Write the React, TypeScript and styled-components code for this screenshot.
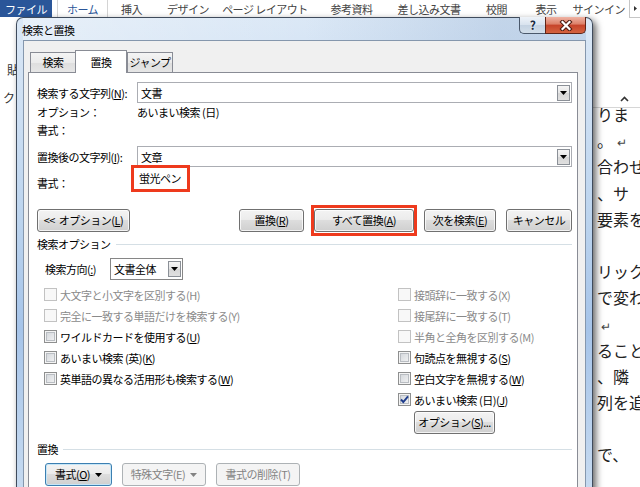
import * as React from "react";
import styled, { createGlobalStyle, css } from "styled-components";

const GlobalStyle = createGlobalStyle`
  * { box-sizing: border-box; }
  html, body {
    margin: 0;
    padding: 0;
    background: #ffffff;
    overflow: hidden;
  }
  body {
    font-family: "Noto Sans CJK JP", "Noto Sans", "Liberation Sans", sans-serif;
    font-size: 11px;
    letter-spacing: -0.5px;
    color: #000;
  }
`;

const Screen = styled.div`
  width: 640px;
  height: 487px;
  overflow: hidden;
  display: flex;
  flex-direction: column;
  background: #fff;
`;

/* ---------- Word ribbon behind the dialog ---------- */

const RibbonTabs = styled.div`
  height: 17px;
  flex-shrink: 0;
  display: flex;
  line-height: 15px;
  color: #444;
`;

const FileTab = styled.div`
  width: 52px;
  margin-right: 5px;
  padding-top: 2px;
  background: #2a5699;
  color: #fff;
  text-align: center;
`;

const RibbonTab = styled.div<{ $w: number; $active?: boolean; $right?: boolean }>`
  width: ${p => p.$w}px;
  flex-shrink: 0;
  padding-top: 2px;
  text-align: ${p => (p.$right ? "right" : "center")};
  padding-right: ${p => (p.$right ? 4 : 0)}px;
  white-space: nowrap;
  ${p =>
    p.$active &&
    css`
      background: #fff;
      color: #2a5699;
      border-left: 1px solid #d4d4d4;
      border-right: 1px solid #d4d4d4;
    `}
`;

const MoreBox = styled.div`
  width: 11px;
  height: 18px;
  border-left: 1px solid #c6c6c6;
  border-bottom: 1px solid #c6c6c6;
  display: flex;
  align-items: center;
  justify-content: center;
`;

const Main = styled.div`
  flex: 1;
  min-height: 0;
  display: flex;
  align-items: flex-start;
`;

const LeftStrip = styled.div`
  width: 16px;
  flex-shrink: 0;
  overflow: hidden;
  padding-top: 45px;
  font-size: 12px;
  line-height: 16px;
  color: #333;
  white-space: nowrap;
`;

const StripText = styled.div<{ $x: number; $gap?: number }>`
  padding-left: ${p => p.$x}px;
  margin-top: ${p => p.$gap ?? 0}px;
`;

const RightStrip = styled.div`
  flex: 1;
  min-width: 0;
  overflow: hidden;
  display: flex;
  flex-direction: column;
`;

const RibbonRest = styled.div`
  height: 91px;
  border-bottom: 1px solid #d6d6d6;
  display: flex;
  align-items: flex-end;
  justify-content: flex-end;
  padding: 0 11px 5px 0;
`;

const DocText = styled.div`
  margin-top: -7px;
  padding-left: 4px;
  font-size: 16px;
  letter-spacing: 0;
  line-height: 26.2px;
  color: #222;
  white-space: pre;
`;

const DocLine = styled.div`
  height: 26.2px;
`;

const Ret = styled.span`
  font-size: 12px;
  color: #444;
  margin-left: 4px;
`;

/* ---------- Dialog window ---------- */

const Dialog = styled.div`
  position: relative;
  z-index: 2;
  width: 577px;
  flex-shrink: 0;
  display: flex;
  flex-direction: column;
  border: 1px solid #3f4b5c;
  border-bottom: none;
  border-radius: 7px 7px 0 0;
  padding: 0 6px;
  background: linear-gradient(
    180deg,
    #dbe8f6 0px,
    #cfe0f3 80px,
    #bcd4ee 200px,
    #a6c4e9 310px,
    #c6daf0 470px
  );
  box-shadow: 3px 3px 7px rgba(0, 0, 0, 0.6);
`;

const TitleBar = styled.div`
  height: 22px;
  display: flex;
  justify-content: space-between;
  align-items: flex-start;
  background: linear-gradient(90deg, rgba(255, 255, 255, 0.35), rgba(255, 255, 255, 0) 50%, rgba(110, 145, 190, 0.22) 85%);
`;

const TitleText = styled.div`
  padding-top: 4px;
  margin-left: -1px;
  line-height: 16px;
`;

const CaptionButtons = styled.div`
  display: flex;
  margin-top: -1px;
`;

const HelpButton = styled.div`
  width: 26px;
  height: 17px;
  border: 1px solid #4b596c;
  border-top: none;
  border-right: none;
  border-radius: 0 0 0 5px;
  background: linear-gradient(#eef3f9, #d8e2ee 50%, #c4d2e2 51%, #d2deea);
  display: flex;
  align-items: center;
  justify-content: center;
  font-size: 12px;
  font-weight: bold;
  color: #1b2a40;
  line-height: 1;
  text-shadow: 0 0 2px #fff;
`;

const CloseButton = styled.div`
  width: 41px;
  height: 17px;
  border: 1px solid #5e2418;
  border-top: none;
  border-radius: 0 0 5px 0;
  background: linear-gradient(#efb3a4, #dc7f67 45%, #c6432a 50%, #d4633f 100%);
  display: flex;
  align-items: center;
  justify-content: center;
`;

const Body = styled.div`
  background: #f0f0f0;
  border: 1px solid #8597ad;
  border-bottom: none;
  padding: 9px 7px 0 4px;
`;

const TabRow = styled.div`
  height: 23px;
  display: flex;
  align-items: flex-end;
  padding-left: 2px;
  margin-bottom: -1px;
`;

const Tab = styled.div<{ $active?: boolean }>`
  width: 46px;
  height: 20px;
  margin-bottom: 1px;
  border: 1px solid #898c95;
  border-bottom: none;
  background: linear-gradient(#f4f4f4, #ebebeb 50%, #dedede 51%, #e6e6e6);
  text-align: center;
  line-height: 19px;
  ${p =>
    p.$active &&
    css`
      position: relative;
      z-index: 1;
      width: 52px;
      height: 23px;
      margin: 0 0 0 -1px;
      background: #fff;
      line-height: 22px;
    `}
`;

const Panel = styled.div`
  background: #fff;
  border: 1px solid #898c95;
  padding: 9px 5px 30px 8px;
`;

const FieldRow = styled.div<{ $gap?: number }>`
  display: flex;
  align-items: center;
  margin-top: ${p => p.$gap ?? 0}px;
`;

const FieldLabel = styled.div<{ $drop?: number }>`
  width: 100px;
  flex-shrink: 0;
  line-height: 18px;
  white-space: nowrap;
  padding-top: ${p => p.$drop ?? 0}px;
`;

const InfoRow = styled.div`
  display: flex;
  line-height: 18px;
`;

const Combo = styled.div`
  flex: 1;
  height: 21px;
  display: flex;
  align-items: center;
  padding: 0 1px 0 3px;
  border: 1px solid #abadb3;
  background: #fff;
`;

const DropButton = styled.div`
  margin-left: auto;
  width: 13px;
  height: 16px;
  flex-shrink: 0;
  border: 1px solid #8b9097;
  background: linear-gradient(#f5f5f5, #e6e6e6 50%, #d6d6d6 51%, #e0e0e0);
  display: flex;
  align-items: center;
  justify-content: center;
`;

const RedFrame = styled.div`
  border: 3px solid #ee3a1d;
`;

const MarkedValue = styled(RedFrame)`
  margin: -2px 0 0 -6px;
  padding: 1px 6px 1px 5px;
  line-height: 19px;
`;

const MarkedButton = styled(RedFrame)`
  margin: 0 -3px;
  padding: 1px 0;
`;

const ButtonRow = styled.div`
  display: flex;
  align-items: center;
  gap: 10px;
  height: 32px;
  margin-top: 12px;
`;

const Spacer = styled.div`
  flex: 1;
`;

const Button = styled.div<{ $w: number; $disabled?: boolean; $default?: boolean }>`
  width: ${p => p.$w}px;
  height: 23px;
  flex-shrink: 0;
  display: flex;
  align-items: center;
  justify-content: center;
  gap: 5px;
  border: 1px solid #707070;
  border-radius: 3px;
  background: linear-gradient(#f3f3f3 0%, #ececec 45%, #dddddd 50%, #cfcfcf 100%);
  box-shadow: inset 0 0 0 1px rgba(255, 255, 255, 0.75);
  line-height: 1;
  white-space: nowrap;
  ${p =>
    p.$default &&
    css`
      border-color: #3c7fb1;
      box-shadow: inset 0 0 0 1px #c6e6f7;
    `}
  ${p =>
    p.$disabled &&
    css`
      border-color: #adb2b5;
      background: #f4f4f4;
      box-shadow: none;
      color: #838383;
    `}
`;

const U = styled.span`
  text-decoration: underline;
  text-underline-offset: 1px;
`;

const GroupHeader = styled.div<{ $gap: number }>`
  display: flex;
  align-items: center;
  line-height: 16px;
  margin-top: ${p => p.$gap}px;
  &::after {
    content: "";
    flex: 1;
    height: 1px;
    margin-left: 5px;
    background: #d5dfe5;
  }
`;

const DirectionRow = styled.div`
  display: flex;
  align-items: center;
  margin-top: 6px;
  padding-left: 8px;
`;

const DirectionLabel = styled.div`
  width: 65px;
`;

const Select = styled.div`
  width: 73px;
  height: 22px;
  display: flex;
  align-items: center;
  padding: 0 1px 0 3px;
  border: 1px solid #868686;
  background: #fff;
`;

const OptionColumns = styled.div`
  display: flex;
  margin-top: 4px;
  padding-left: 7px;
`;

const LeftOptions = styled.div`
  width: 354px;
  flex-shrink: 0;
`;

const RightOptions = styled.div`
  display: flex;
  flex-direction: column;
  align-items: flex-start;
`;

const CheckRow = styled.div<{ $disabled?: boolean }>`
  height: 21px;
  display: flex;
  align-items: center;
  gap: 3px;
  white-space: nowrap;
  color: ${p => (p.$disabled ? "#8a8a8a" : "#000")};
`;

const CheckBox = styled.span<{ $disabled?: boolean }>`
  width: 13px;
  height: 13px;
  flex-shrink: 0;
  display: flex;
  align-items: center;
  justify-content: center;
  border: 1px solid ${p => (p.$disabled ? "#c2c2c2" : "#8e8f8f")};
  background: ${p => (p.$disabled ? "#f8f8f8" : "linear-gradient(135deg, #cfd3d8, #f6f6f6)")};
  box-shadow: ${p => (p.$disabled ? "none" : "inset 0 0 0 1px #f4f4f4, inset 0 0 0 2px #b9bdc2")};
`;

const OptionsButtonWrap = styled.div`
  margin: 1px 0 0 16px;
`;

const BottomButtons = styled.div`
  display: flex;
  gap: 10px;
  margin-top: 6px;
  padding-left: 8px;
`;

const Caret = ({ color = "#000" }: { color?: string }) => (
  <svg width="7" height="4" viewBox="0 0 7 4">
    <path d="M0 0H7L3.5 4Z" fill={color} />
  </svg>
);

const CheckMark = () => (
  <svg width="11" height="11" viewBox="0 0 11 11">
    <path d="M2 5.5L4.3 8L9 2.3" fill="none" stroke="#1e3c8c" strokeWidth="1.9" />
  </svg>
);

type Opt = { label: React.ReactNode; disabled?: boolean; checked?: boolean };

const leftOptions: Opt[] = [
  { label: "大文字と小文字を区別する(H)", disabled: true },
  { label: "完全に一致する単語だけを検索する(Y)", disabled: true },
  { label: <>ワイルドカードを使用する(<U>U</U>)</> },
  { label: <>あいまい検索 (英)(<U>K</U>)</> },
  { label: <>英単語の異なる活用形も検索する(<U>W</U>)</> },
];

const rightOptions: Opt[] = [
  { label: "接頭辞に一致する(X)", disabled: true },
  { label: "接尾辞に一致する(T)", disabled: true },
  { label: "半角と全角を区別する(M)", disabled: true },
  { label: <>句読点を無視する(<U>S</U>)</> },
  { label: <>空白文字を無視する(<U>W</U>)</> },
  { label: <>あいまい検索 (日)(<U>J</U>)</>, checked: true },
];

const docLines: React.ReactNode[] = [
  "りま",
  <>。<Ret>↵</Ret></>,
  "合わせ",
  "、サ",
  "要素を",
  "",
  "リック",
  "で変わ",
  <Ret>↵</Ret>,
  "ること",
  "、隣",
  "列を追",
  "",
  "で、",
];

const OptionRow = ({ opt }: { opt: Opt }) => (
  <CheckRow $disabled={opt.disabled}>
    <CheckBox $disabled={opt.disabled}>{opt.checked && <CheckMark />}</CheckBox>
    <span>{opt.label}</span>
  </CheckRow>
);

const App: React.FC = () => {
  return (
    <Screen>
      <GlobalStyle />
      <RibbonTabs>
        <FileTab>ファイル</FileTab>
        <RibbonTab $w={51} $active>ホーム</RibbonTab>
        <RibbonTab $w={47}>挿入</RibbonTab>
        <RibbonTab $w={66}>デザイン</RibbonTab>
        <RibbonTab $w={88}>ページ レイアウト</RibbonTab>
        <RibbonTab $w={85}>参考資料</RibbonTab>
        <RibbonTab $w={70}>差し込み文書</RibbonTab>
        <RibbonTab $w={65}>校閲</RibbonTab>
        <RibbonTab $w={34}>表示</RibbonTab>
        <RibbonTab $w={66} $right>サインイン</RibbonTab>
        <MoreBox>
          <svg width="3" height="5" viewBox="0 0 3 5">
            <path d="M0 0L3 2.5L0 5Z" fill="#333" />
          </svg>
        </MoreBox>
      </RibbonTabs>

      <Main>
        <LeftStrip>
          <StripText $x={7}>貼</StripText>
          <StripText $x={3} $gap={12}>クリ</StripText>
        </LeftStrip>

        <Dialog>
          <TitleBar>
            <TitleText>検索と置換</TitleText>
            <CaptionButtons>
              <HelpButton>?</HelpButton>
              <CloseButton>
                <svg width="14" height="11" viewBox="0 0 14 11">
                  <path d="M3.5 2L10.5 9M10.5 2L3.5 9" stroke="#4a1a10" strokeWidth="4.2" strokeLinecap="square" />
                  <path d="M3.5 2L10.5 9M10.5 2L3.5 9" stroke="#fff" strokeWidth="2.2" strokeLinecap="square" />
                </svg>
              </CloseButton>
            </CaptionButtons>
          </TitleBar>

          <Body>
            <TabRow>
              <Tab>検索</Tab>
              <Tab $active>置換</Tab>
              <Tab>ジャンプ</Tab>
            </TabRow>
            <Panel>
              <FieldRow>
                <FieldLabel>検索する文字列(<U>N</U>):</FieldLabel>
                <Combo>
                  文書
                  <DropButton><Caret /></DropButton>
                </Combo>
              </FieldRow>
              <InfoRow>
                <FieldLabel>オプション：</FieldLabel>
                <span>あいまい検索 (日)</span>
              </InfoRow>
              <InfoRow>
                <FieldLabel>書式：</FieldLabel>
              </InfoRow>

              <FieldRow $gap={7}>
                <FieldLabel>置換後の文字列(<U>I</U>):</FieldLabel>
                <Combo>
                  文章
                  <DropButton><Caret /></DropButton>
                </Combo>
              </FieldRow>
              <FieldRow>
                <FieldLabel $drop={7}>書式：</FieldLabel>
                <MarkedValue>蛍光ペン</MarkedValue>
              </FieldRow>

              <ButtonRow>
                <Button $w={93}><span>&lt;&lt;&nbsp; オプション(<U>L</U>)</span></Button>
                <Spacer />
                <Button $w={65}><span>置換(<U>R</U>)</span></Button>
                <MarkedButton>
                  <Button $w={100}><span>すべて置換(<U>A</U>)</span></Button>
                </MarkedButton>
                <Button $w={72}><span>次を検索(<U>E</U>)</span></Button>
                <Button $w={66}><span>キャンセル</span></Button>
              </ButtonRow>

              <GroupHeader $gap={0}>検索オプション</GroupHeader>
              <DirectionRow>
                <DirectionLabel>検索方向(<U>:</U>)</DirectionLabel>
                <Select>
                  文書全体
                  <DropButton><Caret /></DropButton>
                </Select>
              </DirectionRow>

              <OptionColumns>
                <LeftOptions>
                  {leftOptions.map((o, i) => (
                    <OptionRow key={i} opt={o} />
                  ))}
                </LeftOptions>
                <RightOptions>
                  {rightOptions.map((o, i) => (
                    <OptionRow key={i} opt={o} />
                  ))}
                  <OptionsButtonWrap>
                    <Button $w={81}><span>オプション(<U>S</U>)...</span></Button>
                  </OptionsButtonWrap>
                </RightOptions>
              </OptionColumns>

              <GroupHeader $gap={7}>置換</GroupHeader>
              <BottomButtons>
                <Button $w={67} $default>
                  <span>書式(<U>O</U>)</span>
                  <Caret />
                </Button>
                <Button $w={84} $disabled>
                  <span>特殊文字(E)</span>
                  <Caret color="#838383" />
                </Button>
                <Button $w={84} $disabled><span>書式の削除(T)</span></Button>
              </BottomButtons>
            </Panel>
          </Body>
        </Dialog>

        <RightStrip>
          <RibbonRest>
            <svg width="9" height="6" viewBox="0 0 9 6">
              <path d="M1 5L4.5 1.5L8 5" fill="none" stroke="#333" strokeWidth="1.6" />
            </svg>
          </RibbonRest>
          <DocText>
            {docLines.map((l, i) => (
              <DocLine key={i}>{l}</DocLine>
            ))}
          </DocText>
        </RightStrip>
      </Main>
    </Screen>
  );
};

export default App;
